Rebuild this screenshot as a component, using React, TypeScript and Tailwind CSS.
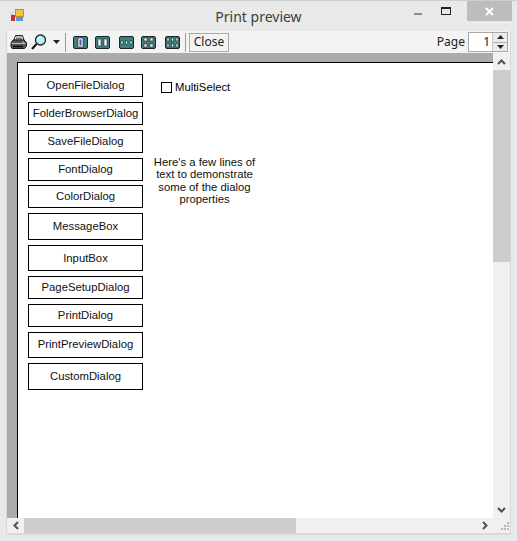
import React from "react";

const buttons: [string, string, string][] = [
  ["OpenFileDialog", "h-[23px] mb-[5px]", "pb-[1px]"],
  ["FolderBrowserDialog", "h-[23px] mb-[5px]", "pb-[1px]"],
  ["SaveFileDialog", "h-[23px] mb-[5px]", "pb-[1px]"],
  ["FontDialog", "h-[23px] mb-[4px]", "pb-[1px]"],
  ["ColorDialog", "h-[23px] mb-[5px]", "pb-[1px]"],
  ["MessageBox", "h-[27px] mb-[5px]", "pb-[1px]"],
  ["InputBox", "h-[26px] mb-[5px]", "pt-[1px]"],
  ["PageSetupDialog", "h-[23px] mb-[5px]", "pb-[1px]"],
  ["PrintDialog", "h-[23px] mb-[5px]", "pb-[1px]"],
  ["PrintPreviewDialog", "h-[26px] mb-[5px]", "pb-[1px]"],
  ["CustomDialog", "h-[27px]", "pb-[1px]"],
];

function Layout({ kind }: { kind: number }) {
  const cells: [number, number, number, number][] =
    kind === 1 ? [[5, 2, 5, 9]] :
    kind === 2 ? [[3, 3, 3, 7], [9, 3, 3, 7]] :
    kind === 3 ? [[2, 5, 2, 3], [6.5, 5, 2, 3], [11, 5, 2, 3]] :
    kind === 4 ? [[3, 2, 3, 3], [9, 2, 3, 3], [3, 8, 3, 3], [9, 8, 3, 3]] :
    [[2, 2, 2, 3], [6.5, 2, 2, 3], [11, 2, 2, 3], [2, 8, 2, 3], [6.5, 8, 2, 3], [11, 8, 2, 3]];
  return (
    <svg width="15" height="13" viewBox="0 0 15 13" className="block">
      <rect x="0.5" y="0.5" width="14" height="12" rx="1.5" fill="#3d7f7f" stroke="#15262c" />
      {cells.map((c, i) => (
        <rect key={i} x={c[0]} y={c[1]} width={c[2]} height={c[3]} fill="#f6f6f6" stroke="#111" strokeWidth="0.5" />
      ))}
      {kind === 1 && <rect x="6.5" y="3.5" width="2" height="6" fill="#5555c0" />}
    </svg>
  );
}

function Printer() {
  return (
    <svg width="17" height="14" viewBox="0 0 17 14" className="block">
      <path d="M5.5 0.5h7l1.5 4.5h-10z" fill="#fff" stroke="#222" />
      <path d="M6 2h6M6 3.5h6" stroke="#777" />
      <path d="M3 5h11l2.5 2.5v3.5l-2 2.5h-12.5l-1-2v-3.5z" fill="#555" stroke="#1a1a1a" />
      <path d="M1.5 8.5h14" stroke="#c0c0c0" />
      <path d="M3 11.5h10" stroke="#0c0c0c" strokeWidth="1.5" />
      <rect x="12" y="6.5" width="2" height="1" fill="#e8d84a" />
    </svg>
  );
}

function Zoom() {
  return (
    <svg width="16" height="16" viewBox="0 0 16 16" className="block">
      <circle cx="9.5" cy="6" r="5" fill="#b5f0f8" stroke="#222" strokeWidth="1.3" />
      <path d="M7 5a3 3 0 0 1 3-2" stroke="#fff" strokeWidth="1.5" fill="none" />
      <path d="M5.5 10l-4.5 5" stroke="#1a1a1a" strokeWidth="2.2" />
    </svg>
  );
}

function Sep() {
  return <div className="w-px h-[19px] bg-[#9a9a9a]" />;
}

function Chevron({ d }: { d: string }) {
  return (
    <svg width="9" height="8" viewBox="0 0 9 8" className="block">
      <path d={d} fill="none" stroke="#505050" strokeWidth="2" />
    </svg>
  );
}

export default function App() {
  return (
    <div className="w-[517px] h-[542px] bg-[#e9e9e9] flex flex-col border-t border-t-[#cfcfcf] border-b border-b-[#d0d0d0] overflow-hidden text-black" style={{ fontFamily: '"Liberation Sans", Arial, sans-serif' }}>
      {/* title bar */}
      <div className="h-[30px] shrink-0 flex items-start relative">
        <svg width="14" height="14" viewBox="0 0 14 14" className="ml-[10px] mt-[8px]">
          <rect x="5.5" y="0.5" width="8" height="7" fill="#f3c63d" stroke="#b8932c" />
          <rect x="0" y="3" width="4" height="3" fill="#d9d9d9" />
          <rect x="1" y="6" width="4" height="6" fill="#c8342c" />
          <rect x="6" y="8" width="7" height="4" fill="#5f94d6" />
        </svg>
        <div className="flex-1 text-center text-[14px] text-[#3d3d3d] mt-[5px] ml-[-24px]" style={{ fontFamily: '"Noto Sans", sans-serif' }}>
          Print preview
        </div>
        <div className="absolute right-[5px] top-0 flex items-start">
          <div className="w-[19px] h-[20px] mr-[14px] flex items-start justify-center pt-[12px]">
            <div className="w-[8px] h-[2px] bg-[#8a8a8a]" />
          </div>
          <div className="w-[10px] h-[8px] mt-[6px] mr-[16px] border border-[#222] border-t-2" />
          <div className="w-[45px] h-[20px] bg-[#bdbdbd] flex items-center justify-center">
            <svg width="9" height="9" viewBox="0 0 9 9"><path d="M1 1l7 7M8 1l-7 7" stroke="#fff" strokeWidth="2" /></svg>
          </div>
        </div>
      </div>

      {/* client frame */}
      <div className="mx-[6px] flex-1 flex flex-col border-x border-x-[#d8d8d8] border-b-2 border-b-[#d8d8d8] min-h-0 mb-[6px] bg-[#f0f0f0]">
        {/* toolbar */}
        <div className="h-[22px] shrink-0 flex items-center pl-[3px] text-[12px] bg-[#f3f3f3]">
          <Printer />
          <div className="w-[4px]" />
          <Zoom />
          <svg width="8" height="4" viewBox="0 0 8 4" className="ml-[6px]"><path d="M0 0h7l-3.5 4z" fill="#222" /></svg>
          <div className="w-[4px]" />
          <Sep />
          <div className="w-[7px]" />
          <Layout kind={1} />
          <div className="w-[7px]" />
          <div className="w-[16px]"><Layout kind={2} /></div>
          <div className="w-[8px]" />
          <Layout kind={3} />
          <div className="w-[7px]" />
          <div className="w-[16px]"><Layout kind={4} /></div>
          <div className="w-[8px]" />
          <Layout kind={5} />
          <div className="w-[5px]" />
          <Sep />
          <div className="w-[3px]" />
          <div className="h-[19px] w-[40px] border border-[#a8a8a8] flex items-center justify-center text-[#222]" style={{ fontFamily: '"Noto Sans", sans-serif' }}>Close</div>
          <div className="flex-1" />
          <span className="text-[#222] mr-[3px] text-[12px]" style={{ fontFamily: '"Noto Sans", sans-serif' }}>Page</span>
          <div className="w-[40px] h-[20px] border border-[#a8a8a8] bg-white flex items-center mr-[2px]">
            <span className="flex-1 text-right pr-[2px] text-[#222]" style={{ fontFamily: '"Noto Sans", sans-serif' }}>1</span>
            <div className="w-[15px] h-full flex flex-col bg-[#ececec] border-l border-l-[#c8c8c8]">
              <div className="flex-1 flex items-center justify-center border-b border-b-[#b0b0b0]">
                <svg width="7" height="4" viewBox="0 0 7 4"><path d="M3.5 0l3.5 4h-7z" fill="#222" /></svg>
              </div>
              <div className="flex-1 flex items-center justify-center">
                <svg width="7" height="4" viewBox="0 0 7 4"><path d="M0 0h7l-3.5 4z" fill="#222" /></svg>
              </div>
            </div>
          </div>
        </div>

        {/* preview + vertical scrollbar */}
        <div className="flex-1 flex min-h-0">
          <div className="flex-1 bg-[#ababab] pl-[10px] pt-[9px] min-w-0">
            <div className="h-full bg-white border-l border-l-black border-t border-t-black pl-[10px] pt-[11px] flex items-start">
              <div className="w-[115px] shrink-0 flex flex-col">
                {buttons.map(([label, cls, pad]) => (
                  <div key={label} className={`${cls} ${pad} border border-black flex items-center justify-center text-[11.3px] text-[#111]`}>
                    {label}
                  </div>
                ))}
              </div>
              <div className="w-[110px] ml-[9px] flex flex-col">
                <div className="flex items-center text-[11.3px] pl-[9px] mt-[5px]">
                  <div className="w-[11px] h-[11px] border border-black mr-[3px]" />
                  <span>MultiSelect</span>
                </div>
                <p className="mt-[60px] text-[11.3px] leading-[12.5px] text-center text-[#111] pr-[5px]">
                  Here's a few lines of text to demonstrate some of the dialog properties
                </p>
              </div>
            </div>
          </div>
          <div className="w-[17px] shrink-0 flex flex-col bg-[#f0f0f0]">
            <div className="h-[17px] flex items-center justify-center">
              <Chevron d="M1 6l3.5-3.5L8 6" />
            </div>
            <div className="h-[192px] bg-[#cdcdcd]" />
            <div className="flex-1" />
            <div className="h-[17px] flex items-center justify-center">
              <Chevron d="M1 2l3.5 3.5L8 2" />
            </div>
          </div>
        </div>

        {/* horizontal scrollbar */}
        <div className="h-[15px] shrink-0 flex items-center bg-[#f0f0f0]">
          <div className="w-[17px] flex justify-center">
            <svg width="8" height="9" viewBox="0 0 8 9"><path d="M6 1L2.5 4.5 6 8" fill="none" stroke="#505050" strokeWidth="2" /></svg>
          </div>
          <div className="w-[272px] h-full bg-[#cdcdcd]" />
          <div className="flex-1" />
          <div className="w-[17px] flex justify-center mr-[4px]">
            <svg width="8" height="9" viewBox="0 0 8 9"><path d="M2 1l3.5 3.5L2 8" fill="none" stroke="#505050" strokeWidth="2" /></svg>
          </div>
          <div className="w-[13px] flex flex-col items-end pr-[1px] gap-[1px]">
            <div className="w-[2px] h-[2px] bg-[#b8b8b8]" />
            <div className="flex gap-[1px]"><div className="w-[2px] h-[2px] bg-[#b8b8b8]" /><div className="w-[2px] h-[2px] bg-[#b8b8b8]" /></div>
            <div className="flex gap-[1px]"><div className="w-[2px] h-[2px] bg-[#b8b8b8]" /><div className="w-[2px] h-[2px] bg-[#b8b8b8]" /><div className="w-[2px] h-[2px] bg-[#b8b8b8]" /></div>
          </div>
        </div>
      </div>
    </div>
  );
}
